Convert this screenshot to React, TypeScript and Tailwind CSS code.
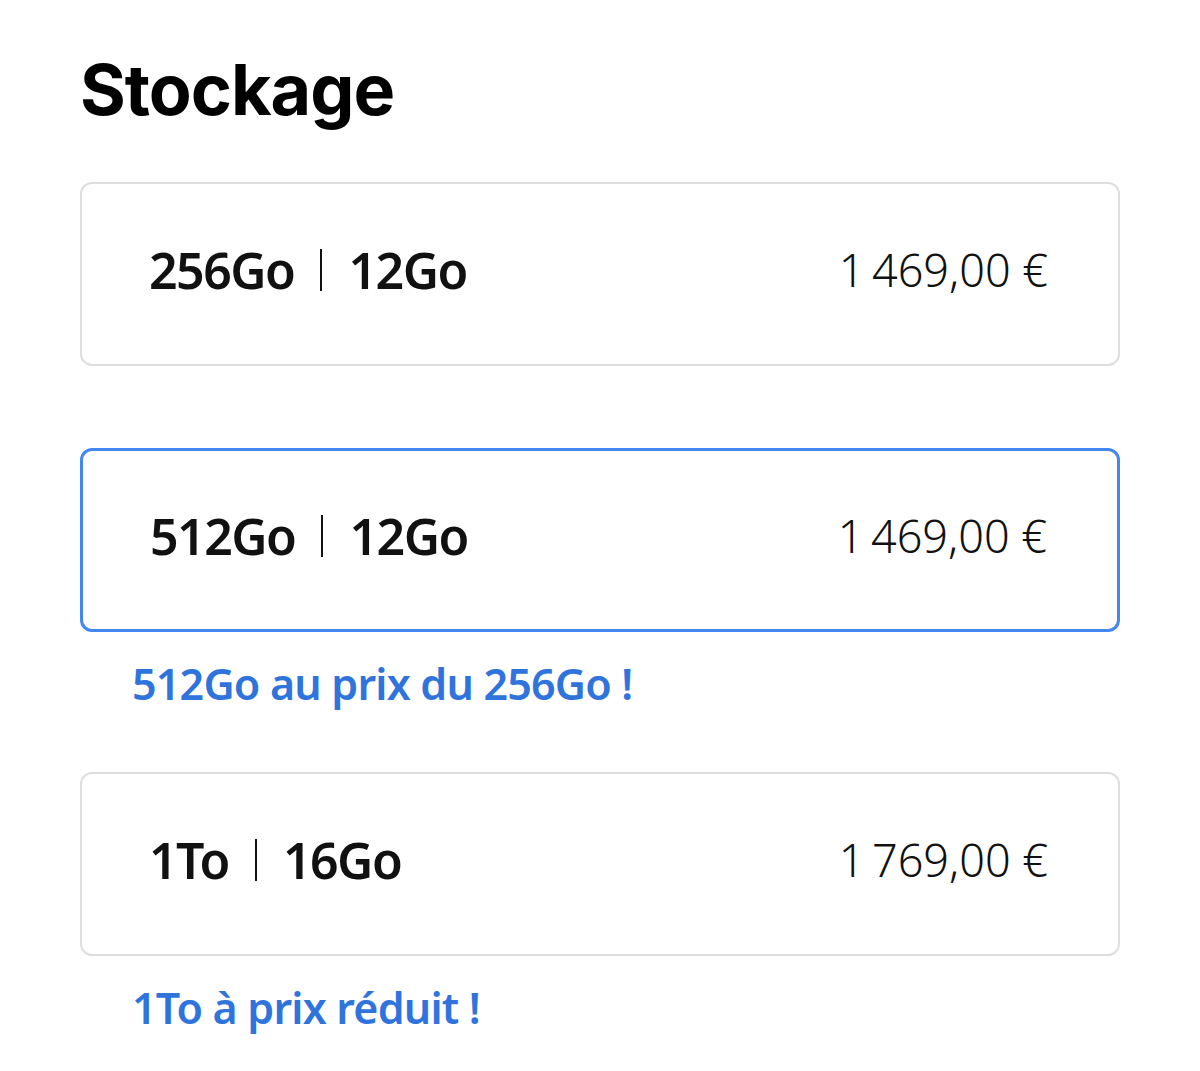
import React from "react";

const rows = [
  { a: "256Go", b: "12Go", price: "1\u202F469,00 €", selected: false, note: "" },
  { a: "512Go", b: "12Go", price: "1\u202F469,00 €", selected: true, note: "512Go au prix du 256Go !" },
  { a: "1To", b: "16Go", price: "1\u202F769,00 €", selected: false, note: "1To à prix réduit !" },
];

function Card({ a, b, price, selected }: { a: string; b: string; price: string; selected: boolean }) {
  return (
    <div
      className={
        "h-[184px] rounded-[12px] flex items-center justify-between pl-[67px] pr-[70px] pb-[8px] bg-white " +
        (selected ? "border-[3px] border-[#4387f0]" : "border-2 border-[#dedede]")
      }
    >
      <div className="flex items-center text-[50px] font-semibold text-[#111] tracking-[-1.5px]" style={{ fontFamily: '"Noto Sans", sans-serif' }}>
        <span>{a}</span>
        <span className="mx-[26px] w-[2px] h-[42px] bg-[#111]" />
        <span>{b}</span>
      </div>
      <div className="text-[45px] font-light text-[#111] tracking-[-0.5px]" style={{ fontFamily: '"Noto Sans", sans-serif' }}>
        {price}
      </div>
    </div>
  );
}

export default function App() {
  return (
    <div className="w-[1200px] h-[1071px] bg-white px-[80px] pt-[46px]" style={{ fontFamily: '"Noto Sans", sans-serif' }}>
      <h1 className="text-[70px] leading-[88px] font-bold text-black tracking-[-1px]" style={{ fontFamily: 'Inter, sans-serif' }}>
        Stockage
      </h1>
      <div className="mt-[48px]">
        <Card {...rows[0]} />
      </div>
      <div className="mt-[82px]">
        <Card {...rows[1]} />
      </div>
      <div className="pl-[52px] mt-[22px] text-[43px] leading-[60px] font-semibold text-[#2f74dc] tracking-[-0.8px]">
        {rows[1].note}
      </div>
      <div className="mt-[58px]">
        <Card {...rows[2]} />
      </div>
      <div className="pl-[52px] mt-[22px] text-[43px] leading-[60px] font-semibold text-[#2f74dc] tracking-[-0.8px]">
        {rows[2].note}
      </div>
    </div>
  );
}
